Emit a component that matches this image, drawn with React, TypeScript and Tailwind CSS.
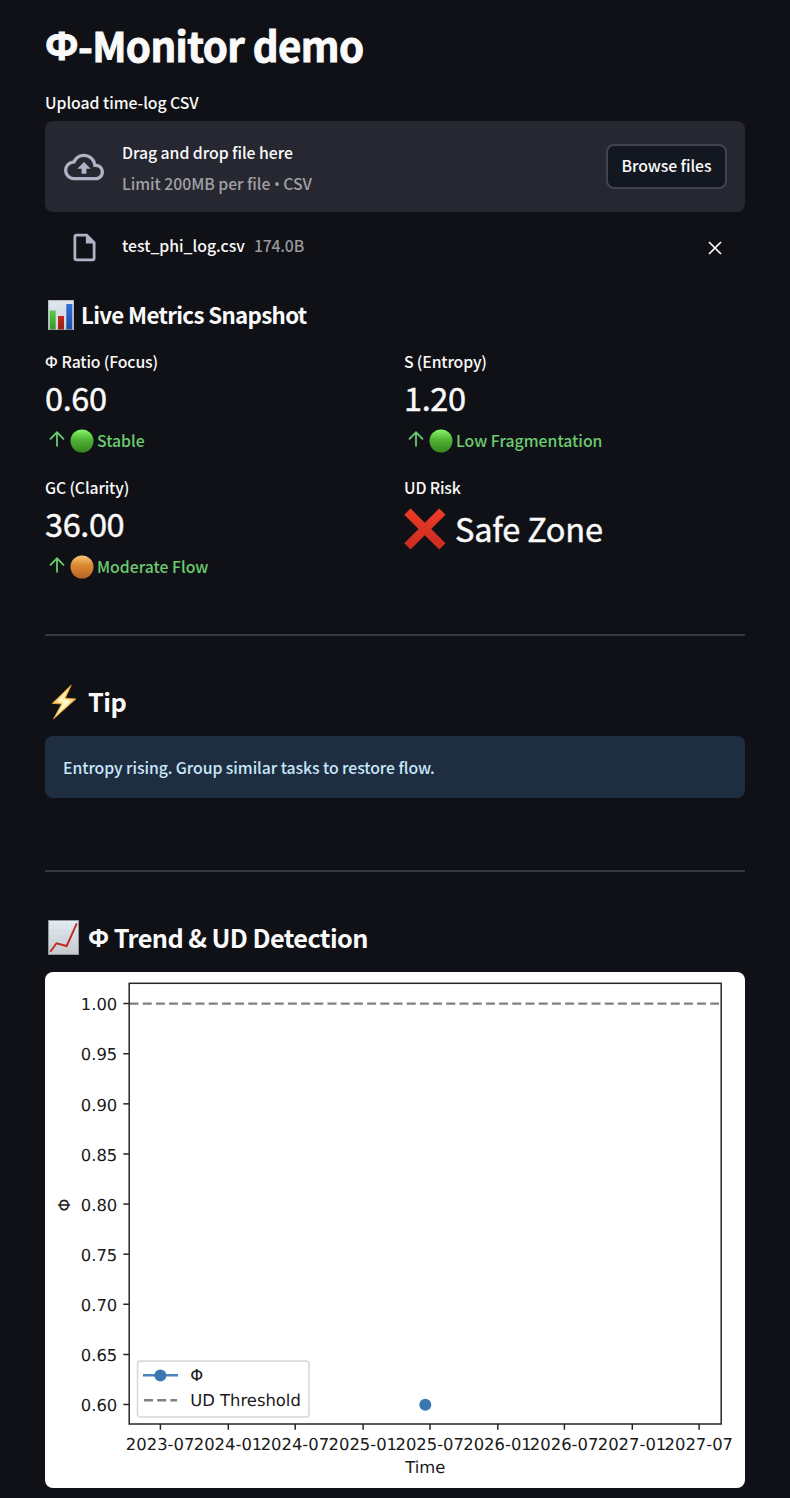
import type { ReactNode } from "react";

function Phi({ className = "" }: { className?: string }) {
  return <span className={`font-['Open_Sans','Noto_Sans',sans-serif] text-[0.970em] ${className}`}>Φ</span>;
}

function BarsEmoji() {
  return (
    <svg viewBox="0 0 26 30" className="block h-[30px] w-[26px]">
      <defs>
        <linearGradient id="bars-bg" x2="0" y2="1">
          <stop stopColor="#dfe6ed" />
          <stop offset="1" stopColor="#cfd4da" />
        </linearGradient>
        <linearGradient id="bars-g" x2="0" y2="1">
          <stop stopColor="#58cc45" />
          <stop offset="1" stopColor="#37952d" />
        </linearGradient>
        <linearGradient id="bars-r" x2="0" y2="1">
          <stop stopColor="#c52a20" />
          <stop offset="1" stopColor="#951d18" />
        </linearGradient>
        <linearGradient id="bars-b" x2="0" y2="1">
          <stop stopColor="#3071db" />
          <stop offset="1" stopColor="#1e4ca4" />
        </linearGradient>
      </defs>
      <rect width="26" height="30" fill="#a3abb3" />
      <rect x=".7" y=".7" width="24.6" height="28.6" fill="url(#bars-bg)" />
      <rect x="1.7" y="10.5" width="6" height="19" fill="url(#bars-g)" />
      <rect x="10" y="16" width="6" height="13.5" fill="url(#bars-r)" />
      <rect x="18.3" y="4" width="6" height="25.5" fill="url(#bars-b)" />
    </svg>
  );
}

function TrendEmoji() {
  return (
    <svg viewBox="0 0 31 35" className="block h-[35px] w-[31px]">
      <defs>
        <linearGradient id="trend-bg" x2="0" y2="1">
          <stop stopColor="#e4ebf3" />
          <stop offset="1" stopColor="#c6cace" />
        </linearGradient>
      </defs>
      <rect width="31" height="35" fill="#8f989d" />
      <rect x="1" y="1" width="29" height="33" fill="url(#trend-bg)" />
      <path
        d="M5.5 1v33M10 1v33M14.5 1v33M19 1v33M23.5 1v33M1 6h29M1 11h29M1 16h29M1 21h29M1 26h29M1 30.500h29"
        stroke="#bdc9d8"
        strokeWidth=".4"
        opacity=".3"
      />
      <path d="M2.300 31.800L8.500 23.300L18.700 26L28.800 3.300" fill="none" stroke="#c02a22" strokeWidth="1.900" />
    </svg>
  );
}

function BoltEmoji() {
  return (
    <svg viewBox="0 0 26 36" className="block h-9 w-[26px]">
      <defs>
        <linearGradient id="bolt" x1="0" y1="0" x2="1" y2="1">
          <stop stopColor="#f09a28" />
          <stop offset=".5" stopColor="#fff3a8" />
          <stop offset="1" stopColor="#f0a02c" />
        </linearGradient>
      </defs>
      <path
        d="M20.200 1.200L1.200 19.400L10.700 19.900L2.600 34.800L24.800 15L14.200 14.200Z"
        fill="url(#bolt)"
        stroke="#e69a34"
        strokeWidth="1"
        strokeLinejoin="round"
      />
      <path d="M15.500 7.500L6.500 17.300L14 17.700L8.500 27.500L19.500 16.900L10.800 16.100Z" fill="#fffbd6" />
    </svg>
  );
}

function CrossEmoji() {
  return (
    <svg viewBox="0 0 42 42" className="block size-[42px]">
      <defs>
        <linearGradient id="cross" x2="0" y2="1">
          <stop stopColor="#ee3c26" />
          <stop offset="1" stopColor="#c92b20" />
        </linearGradient>
      </defs>
      <path
        d="M6.500.5L20.800 14.700L35.200.5L41.500 6.800L27.200 21L41.500 35.200L35.200 41.500L20.800 27.300L6.500 41.500L.3 35.200L14.500 21L.3 6.800Z"
        fill="url(#cross)"
      />
    </svg>
  );
}

function CircleEmoji({ tone }: { tone: "green" | "orange" }) {
  const stops = tone === "green" ? ["#86fa66", "#54b638", "#33851f"] : ["#f8c476", "#db8a31", "#b86322"];
  return (
    <svg viewBox="0 0 24 24" className="block size-6 shrink-0">
      <defs>
        <linearGradient id={`ball-${tone}`} x2="0" y2="1">
          <stop stopColor={stops[0]} />
          <stop offset=".42" stopColor={stops[1]} />
          <stop offset="1" stopColor={stops[2]} />
        </linearGradient>
      </defs>
      <circle cx="12" cy="12" r="11.500" fill={`url(#ball-${tone})`} />
    </svg>
  );
}

function Metric({ label, value, tone, delta }: { label: ReactNode; value: string; tone: "green" | "orange"; delta: string }) {
  return (
    <div className="h-[126px]">
      <div className="flex h-[26px] items-center text-[15.8px] font-medium tracking-[-0.15px]">{label}</div>
      <div className="flex h-[45px] items-center text-[32.500px] tracking-[-0.400px] [-webkit-text-stroke:0.450px_#fafafa]">{value}</div>
      <div className="flex h-[41px] items-center pl-1 font-medium text-[#6bcb70]">
        <svg viewBox="0 0 16 16" className="mr-[5px] -mt-1 size-4">
          <path d="M8 15.500V1.500M1 8.300L8 1.300L15 8.300" fill="none" stroke="currentColor" strokeWidth="1.800" />
        </svg>
        <CircleEmoji tone={tone} />
        <span className="ml-[3px] text-[15.800px]">{delta}</span>
      </div>
    </div>
  );
}

const yTicks = ["1.00", "0.95", "0.90", "0.85", "0.80", "0.75", "0.70", "0.65", "0.60"];
const xTicks: [number, string][] = [
  [115.4, "2023-07"],
  [183.3, "2024-01"],
  [250.2, "2024-07"],
  [318.1, "2025-01"],
  [385, "2025-07"],
  [452.8, "2026-01"],
  [519.4, "2026-07"],
  [587.3, "2027-01"],
  [654.1, "2027-07"],
];

function TrendChart() {
  return (
    <svg viewBox="0 0 700 516" textRendering="geometricPrecision" className="block h-[516px] w-[700px] rounded-lg bg-white font-['DejaVu_Sans',sans-serif] text-[16.4px]">
      <line x1="84.500" x2="674" y1="31.600" y2="31.600" stroke="#808080" strokeWidth="2.400" strokeDasharray="9 4.200" />
      <rect x="84.200" y="11.300" width="592" height="440.700" fill="none" stroke="#262626" strokeWidth="1.500" />
      {yTicks.map((t, i) => (
        <g key={t}>
          <line x1="78.300" x2="84" y1={31.6 + i * 50.12} y2={31.6 + i * 50.12} stroke="#262626" strokeWidth="1.500" />
          <text x="72.300" y={38.3 + i * 50.12} textAnchor="end" fill="#1a1a1a">{t}</text>
        </g>
      ))}
      {xTicks.map(([x, t]) => (
        <g key={t}>
          <line x1={x} x2={x} y1="452" y2="457.700" stroke="#262626" strokeWidth="1.500" />
          <text x={x - 0.3} y="477.500" textAnchor="middle" fill="#1a1a1a">{t}</text>
        </g>
      ))}
      <text x="380.200" y="500.800" textAnchor="middle" fill="#1a1a1a">Time</text>
      <text transform="translate(25 233) rotate(-90)" textAnchor="middle" fill="#1a1a1a">Φ</text>
      <circle cx="380.300" cy="432.700" r="6" fill="#3a76b0" />
      <rect x="92.500" y="389" width="171.500" height="56" rx="3" fill="white" stroke="#d6d6d6" strokeWidth="1.500" />
      <line x1="98" x2="133" y1="403.300" y2="403.300" stroke="#4a82bd" strokeWidth="2.400" />
      <circle cx="115.400" cy="403.500" r="6" fill="#3a76b0" />
      <line x1="99" x2="132" y1="428.300" y2="428.300" stroke="#808080" strokeWidth="2.400" strokeDasharray="9 4.200" />
      <text x="145.200" y="409" fill="#1a1a1a">Φ</text>
      <text x="145.200" y="434" fill="#1a1a1a">UD Threshold</text>
    </svg>
  );
}

export default function App() {
  return (
    <main className="h-[1498px] w-[790px] overflow-hidden bg-[#101116] px-[45px] font-['Noto_Sans_CJK_SC',sans-serif] text-[15.800px] text-[#fafafa]">
      <h1 className="flex h-[91px] items-center pb-px text-[40.200px] font-bold tracking-[-0.600px] whitespace-pre [-webkit-text-stroke:0.900px_#fafafa]"><Phi />-Monitor demo</h1>
      <div className="flex h-[30px] items-center pb-1.5 font-medium tracking-[-0.050px]">Upload time-log CSV</div>
      <section className="flex h-[91px] items-center rounded-lg bg-[#262730] pr-[18px] pl-[19px]">
        <svg viewBox="0 0 24 24" className="mr-[18px] size-10" fill="#b0b3c6">
          <path d="M19.350 10.040A7.490 7.490 0 0 0 12 4C9.110 4 6.600 5.640 5.350 8.040A5.994 5.994 0 0 0 0 14c0 3.310 2.690 6 6 6h13c2.760 0 5-2.240 5-5 0-2.640-2.050-4.780-4.650-4.960zM19 18H6c-2.210 0-4-1.790-4-4 0-2.050 1.530-3.760 3.560-3.970l1.070-.11.500-.95A5.469 5.469 0 0 1 12 6c2.620 0 4.880 1.860 5.390 4.430l.300 1.500 1.530.110A2.980 2.980 0 0 1 22 15c0 1.650-1.350 3-3 3zM8 13h2.550v3h2.900v-3H16l-4-4z" />
        </svg>
        <div className="grow pt-0.5 font-medium tracking-[-0.050px]">
          <div className="h-[31px] leading-[31px]">Drag and drop file here</div>
          <div className="h-[31px] leading-[31px] text-[#a0a0a4]">Limit 200MB per file <span className="font-['Open_Sans',sans-serif]">•</span> CSV</div>
        </div>
        <button className="h-[45px] w-[121px] rounded-lg border-2 border-[#41434d] bg-[#131720] pb-0.5 font-medium tracking-[-0.080px]">Browse files</button>
      </section>
      <div className="flex h-[71px] items-center pr-[22px] pl-[23px] font-medium">
        <svg viewBox="0 0 24 24" className="mr-[21px] size-[33px]" fill="#b0b3c6">
          <path d="M14 2H6c-1.100 0-1.990.9-1.990 2L4 20c0 1.100.890 2 1.990 2H18c1.100 0 2-.9 2-2V8l-6-6zM6 20V4h7v5h5v11H6z" />
        </svg>
        <span className="pb-[3px]">test_phi_log.csv</span>
        <span className="ml-[9px] grow pb-[3px] tracking-[-0.200px] text-[#97979b]">174.0B</span>
        <svg viewBox="0 0 16 16" className="size-4"><path d="M2 2L14 14M14 2L2 14" stroke="#fff" strokeWidth="1.700" /></svg>
      </div>
      <h2 className="flex h-[66px] items-center pb-0.5 pl-[3px] text-[22.300px] font-bold tracking-[-0.660px]"><BarsEmoji /><span className="ml-[7px]">Live Metrics Snapshot</span></h2>
      <section className="grid grid-cols-[359px_1fr]">
        <Metric label={<><Phi className="mr-1 pt-px font-semibold" />Ratio (Focus)</>} value="0.60" tone="green" delta="Stable" />
        <Metric label="S (Entropy)" value="1.20" tone="green" delta="Low Fragmentation" />
        <Metric label="GC (Clarity)" value="36.00" tone="orange" delta="Moderate Flow" />
        <div>
          <div className="flex h-[26px] items-center font-medium tracking-[-0.150px]">UD Risk</div>
          <div className="flex h-[55px] items-center text-[32.500px] tracking-[-0.200px]"><CrossEmoji /><span className="ml-[9px] [-webkit-text-stroke:0.450px_#fafafa]">Safe Zone</span></div>
        </div>
      </section>
      <hr className="mt-[33px] border-t-2 border-[#37383e]" />
      <h2 className="mt-[42px] flex h-[50px] items-center pb-[3px] pl-1.5 text-[25.300px] font-bold tracking-[-0.500px]"><BoltEmoji /><span className="ml-[11px]">Tip</span></h2>
      <div className="mt-2 flex h-[62px] items-center rounded-lg bg-[#1f2d40] px-[18px] pt-0.5 font-medium tracking-[-0.070px] text-[#c7e7fb]">Entropy rising. Group similar tasks to restore flow.</div>
      <hr className="mt-[72px] border-t-2 border-[#37383e]" />
      <h2 className="mt-[42px] flex h-[50px] items-center pb-[3px] pl-[3px] text-[25.300px] font-bold tracking-[-0.600px] whitespace-pre"><TrendEmoji /><Phi className="ml-[9px] pt-px" /> Trend &amp; UD Detection</h2>
      <div className="mt-2"><TrendChart /></div>
    </main>
  );
}
